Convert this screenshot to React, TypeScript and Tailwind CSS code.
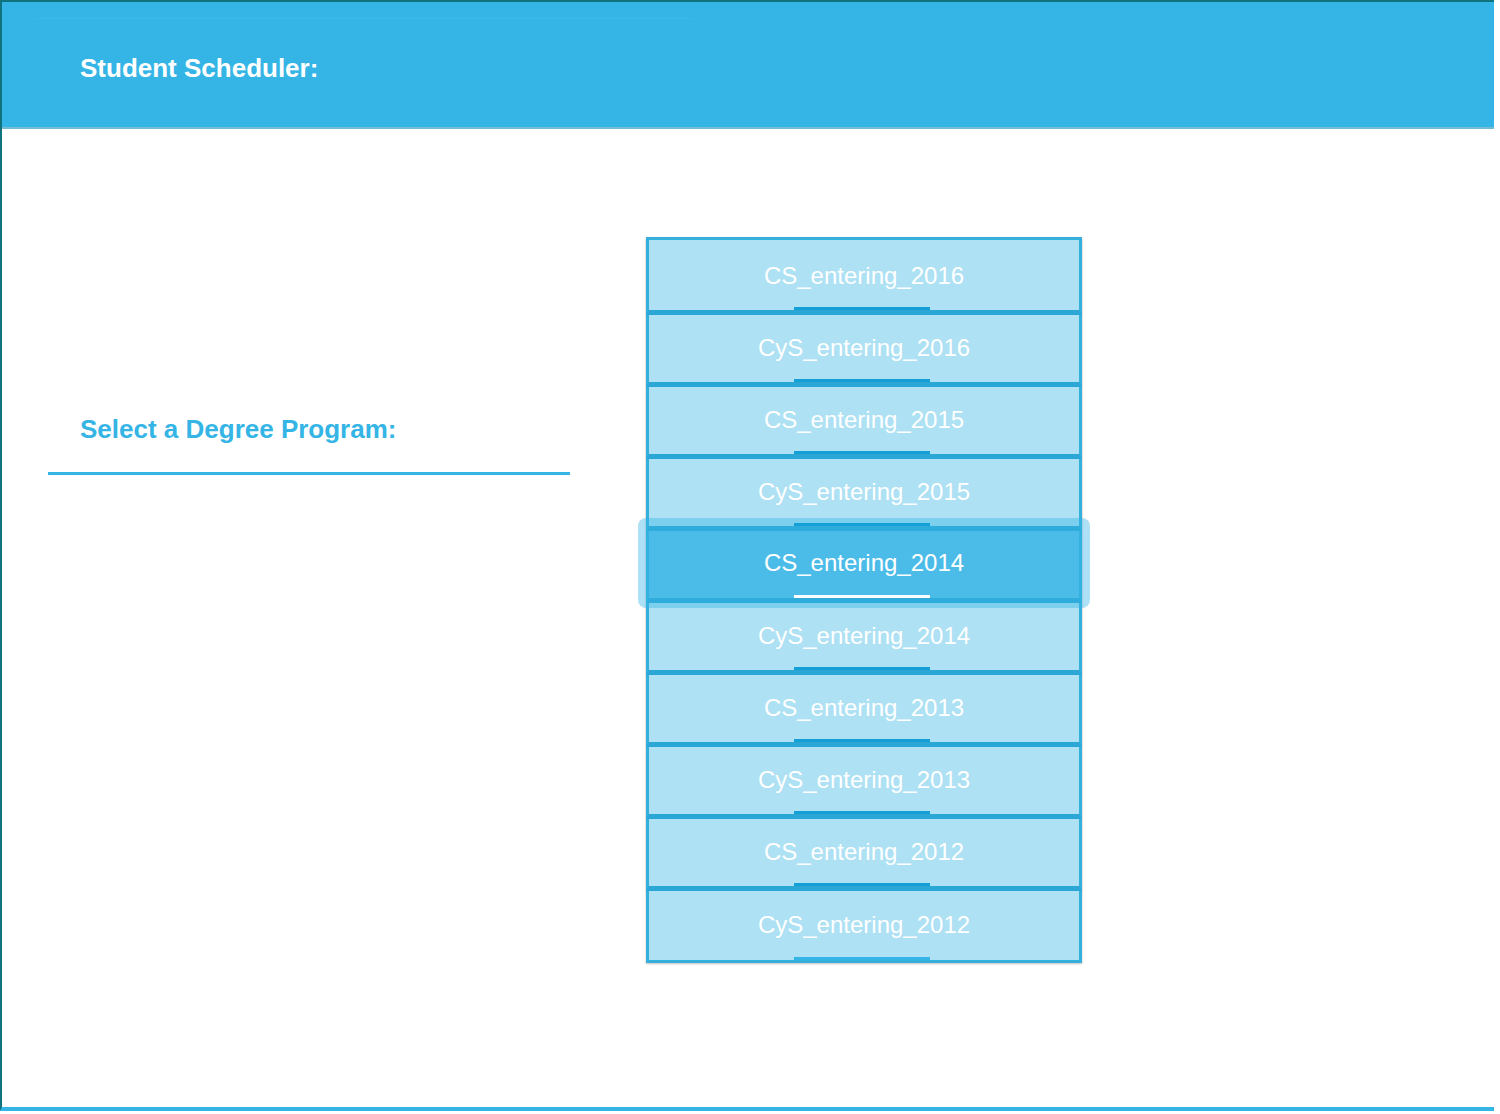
import React from "react";

const items = [
  "CS_entering_2016",
  "CyS_entering_2016",
  "CS_entering_2015",
  "CyS_entering_2015",
  "CS_entering_2014",
  "CyS_entering_2014",
  "CS_entering_2013",
  "CyS_entering_2013",
  "CS_entering_2012",
  "CyS_entering_2012",
];

export default function App() {
  const selected = 4;
  return (
    <div
      className="w-[1494px] h-[1111px] border-t-2 border-l-2 border-[#10737d] border-b-4 border-b-[#35b5e5] bg-white flex flex-col"
      style={{ fontFamily: '"Liberation Sans", Arial, sans-serif' }}
    >
      <header className="h-[127px] shrink-0 bg-[#35b5e5] border-b-2 border-[#74bcd6] flex flex-col">
        <div className="ml-[34px] mt-[16px] w-[656px] h-[1px] bg-[#3cb9e7]" />
        <div className="flex-1 flex items-center pl-[78px] pb-[10px]">
          <h1 className="text-white font-bold text-[26px] leading-[30px]">
            Student Scheduler:
          </h1>
        </div>
      </header>
      <main className="flex-1 flex">
        <div className="w-[568px] pl-[46px] pt-[285px] shrink-0">
          <div className="pl-[32px] text-[#35b5e5] font-bold text-[26px] leading-[30px]">
            Select a Degree Program:
          </div>
          <div className="mt-[28px] h-[3px] w-[522px] bg-[#35b5e5]" />
        </div>
        <div className="ml-[76px] pt-[108px]">
          <div className="w-[436px] border-t-[3px] border-[#35b0dc] shadow-[0_1px_2px_rgba(0,0,0,0.25)]">
            {items.map((name, i) => {
              const isSel = i === selected;
              const isLast = i === items.length - 1;
              const isFirst = i === 0;
              return (
                <div key={name} className="relative">
                  {isSel && (
                    <div className="absolute -left-[8px] -right-[8px] -top-[13px] -bottom-[5px] rounded-[8px] bg-[#35b5e5]/40 z-10 pointer-events-none" />
                  )}
                  <div
                    className={
                      "relative border-l-[3px] border-r-[3px] border-[#35b0dc] flex flex-col " +
                      (isFirst ? "h-[75px] " : "h-[72px] ") +
                      (isLast
                        ? "border-b-[3px] border-b-[#35b0dc] "
                        : "border-b-[5px] border-b-[#2ba7d6] shadow-[0_1px_1px_rgba(0,0,0,0.15)] ") +
                      (isSel ? "bg-[#5ac2ea]" : "bg-[#ade1f3]")
                    }
                  >
                    <div
                      className={
                        "flex-1 flex items-center justify-center " +
                        (isFirst ? "pt-[4px]" : isSel ? "pt-0" : "pt-[2px]")
                      }
                    >
                      <span className="text-white text-[24px] leading-[28px] relative z-20">
                        {name}
                      </span>
                    </div>
                    <div className="flex justify-center relative z-20">
                      <div
                        className={
                          "w-[136px] h-[3px] mr-[4px] " +
                          (isSel ? "bg-white" : isLast ? "bg-[#35b5e5]" : "bg-[#14a0d6]")
                        }
                      />
                    </div>
                  </div>
                </div>
              );
            })}
          </div>
        </div>
      </main>
    </div>
  );
}
